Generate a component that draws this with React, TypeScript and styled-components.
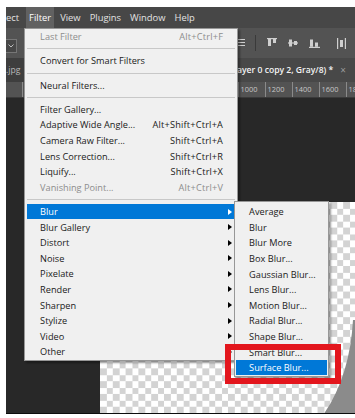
import React from "react";
import styled, { createGlobalStyle } from "styled-components";

const GlobalStyle = createGlobalStyle`
  html, body { margin: 0; padding: 0; background: #ffffff; }
  body { font-family: "Open Sans", "Noto Sans", Arial, sans-serif; }
`;

const Screen = styled.div`
  position: relative;
  box-sizing: border-box;
  width: 349px;
  height: 407px;
  margin: 7px 0 0 6px;
  display: flex;
  flex-direction: column;
  background: #282828;
  border-bottom: 1px solid #0c0c0c;
  overflow: hidden;
`;

const MenuBar = styled.div`
  height: 21px;
  flex: none;
  display: flex;
  align-items: stretch;
  gap: 3px;
  background: #474747;
  font-size: 9.4px;
  color: #e2e2e2;
`;

const MenuTitle = styled.div<{ $open?: boolean; $clipped?: boolean }>`
  position: relative;
  display: flex;
  align-items: center;
  padding: ${(p) => (p.$clipped ? "0 4px 0 0" : "0 3px")};
  background: ${(p) => (p.$open ? "#616161" : "transparent")};
  color: ${(p) => (p.$open ? "#ffffff" : "#e2e2e2")};
  white-space: nowrap;
`;

const OptionsBar = styled.div`
  height: 30px;
  flex: none;
  display: flex;
  align-items: center;
  background: #535353;
  padding-right: 9px;
`;

const PresetPicker = styled.div`
  width: 11px;
  height: 14px;
  box-sizing: border-box;
  border: 1px solid #767676;
  border-left: none;
  background: #474747;
  display: flex;
  align-items: center;
  justify-content: center;
  margin-top: 6px;
`;

const AlignGroup = styled.div`
  margin-left: auto;
  display: flex;
  align-items: center;
  gap: 11px;
`;

const ToolSeparator = styled.div`
  width: 1px;
  height: 16px;
  background: #3a3a3a;
  margin: 0 0 0 -1px;
`;

const AlignIcon = styled.svg<{ $gap?: number }>`
  display: block;
  flex: none;
  margin-left: ${(p) => p.$gap ?? 0}px;
`;

const TabBar = styled.div`
  height: 24px;
  flex: none;
  display: flex;
  align-items: stretch;
  background: #3e3e3e;
  font-size: 8.6px;
`;

const DocTab = styled.div<{ $active?: boolean }>`
  display: flex;
  align-items: center;
  gap: 7px;
  padding: ${(p) => (p.$active ? "0 9px 0 10px" : "0 10px 0 0")};
  margin-left: ${(p) => (p.$active ? "auto" : "0")};
  background: ${(p) => (p.$active ? "#484848" : "transparent")};
  color: ${(p) => (p.$active ? "#f4f4f4" : "#b9b9b9")};
  font-weight: ${(p) => (p.$active ? 600 : 400)};
  white-space: nowrap;
`;

const TabClose = styled.span`
  color: #9a9a9a;
  font-size: 10px;
  font-weight: 400;
`;

const Ruler = styled.div`
  height: 15px;
  flex: none;
  display: flex;
  background: #535353;
  padding-left: 15.5px;
  overflow: hidden;
  border-bottom: 1px solid #3a3a3a;
`;

const RulerMark = styled.div`
  flex: none;
  width: 27px;
  box-sizing: border-box;
  border-left: 1px solid #8a8a8a;
  padding: 3px 0 0 2px;
  font-size: 7.4px;
  line-height: 9px;
  color: #c8c8c8;
  white-space: nowrap;
`;

const Workspace = styled.div`
  flex: 1;
  min-height: 0;
  display: flex;
  padding: 104px 0 0 94px;
  background: #282828;
`;

const DocCanvas = styled.div`
  position: relative;
  flex: 1;
  background-color: #ffffff;
  background-image: conic-gradient(
    #ffffff 25%,
    #d3d3d3 0 50%,
    #ffffff 0 75%,
    #d3d3d3 0
  );
  background-size: 12.8px 12.8px;
`;

const ImageLayer = styled.svg`
  position: absolute;
  inset: 0;
  width: 100%;
  height: 100%;
`;

const DropMenu = styled.div`
  position: absolute;
  z-index: 10;
  top: 100%;
  left: -2px;
  width: 214px;
  box-sizing: border-box;
  padding: 0 2px;
  background: #f0f0f0;
  border: 1px solid #979797;
  box-shadow: 2px 2px 2px rgba(0, 0, 0, 0.35);
  font-size: 9.2px;
  font-weight: 400;
  color: #1a1a1a;
`;

const SubMenu = styled.div`
  position: absolute;
  z-index: 11;
  top: -2.8px;
  left: calc(100% - 1px);
  width: 95px;
  box-sizing: border-box;
  padding: 2px 1px 1px;
  background: #f0f0f0;
  border: 1px solid #979797;
  box-shadow: 2px 2px 2px rgba(0, 0, 0, 0.35);
`;

const MenuRow = styled.div<{ $active?: boolean; $disabled?: boolean; $inset?: number }>`
  position: relative;
  height: 15.6px;
  display: grid;
  grid-template-columns: 1fr auto 12px;
  align-items: center;
  padding-left: ${(p) => p.$inset ?? 13}px;
  white-space: nowrap;
  background: ${(p) => (p.$active ? "#0078d7" : "transparent")};
  color: ${(p) => (p.$active ? "#ffffff" : p.$disabled ? "#8d8d8d" : "#1a1a1a")};
`;

const Shortcut = styled.span`
  letter-spacing: 0.2px;
`;

const SubArrow = styled.span<{ $light?: boolean }>`
  justify-self: start;
  margin-left: 5px;
  width: 0;
  height: 0;
  border-top: 3px solid transparent;
  border-bottom: 3px solid transparent;
  border-left: 4px solid ${(p) => (p.$light ? "#ffffff" : "#000000")};
`;

const MenuSeparator = styled.div`
  height: 8.6px;
  display: flex;
  align-items: center;
  &::before {
    content: "";
    flex: 1;
    height: 1px;
    background: #c8c8c8;
  }
`;

const Callout = styled.div`
  position: absolute;
  z-index: 20;
  left: 219px;
  top: 337px;
  width: 116px;
  height: 40px;
  box-sizing: border-box;
  border: 6px solid #e3161d;
  pointer-events: none;
`;

type Entry =
  | { kind: "sep" }
  | {
      kind: "item";
      label: string;
      shortcut?: string;
      disabled?: boolean;
      sub?: boolean;
      active?: boolean;
    };

const filterEntries: Entry[] = [
  { kind: "item", label: "Last Filter", shortcut: "Alt+Ctrl+F", disabled: true },
  { kind: "sep" },
  { kind: "item", label: "Convert for Smart Filters" },
  { kind: "sep" },
  { kind: "item", label: "Neural Filters..." },
  { kind: "sep" },
  { kind: "item", label: "Filter Gallery..." },
  { kind: "item", label: "Adaptive Wide Angle...", shortcut: "Alt+Shift+Ctrl+A" },
  { kind: "item", label: "Camera Raw Filter...", shortcut: "Shift+Ctrl+A" },
  { kind: "item", label: "Lens Correction...", shortcut: "Shift+Ctrl+R" },
  { kind: "item", label: "Liquify...", shortcut: "Shift+Ctrl+X" },
  { kind: "item", label: "Vanishing Point...", shortcut: "Alt+Ctrl+V", disabled: true },
  { kind: "sep" },
  { kind: "item", label: "Blur", sub: true, active: true },
  { kind: "item", label: "Blur Gallery", sub: true },
  { kind: "item", label: "Distort", sub: true },
  { kind: "item", label: "Noise", sub: true },
  { kind: "item", label: "Pixelate", sub: true },
  { kind: "item", label: "Render", sub: true },
  { kind: "item", label: "Sharpen", sub: true },
  { kind: "item", label: "Stylize", sub: true },
  { kind: "item", label: "Video", sub: true },
  { kind: "item", label: "Other", sub: true },
];

const blurEntries = [
  "Average",
  "Blur",
  "Blur More",
  "Box Blur...",
  "Gaussian Blur...",
  "Lens Blur...",
  "Motion Blur...",
  "Radial Blur...",
  "Shape Blur...",
  "Smart Blur...",
  "Surface Blur...",
];

// ruler ticks every 200 units; labels hidden beneath the open menu are left out
const rulerTicks = Array.from({ length: 13 }, (_, i) => -600 + i * 200);

const iconStroke = "#cfcfcf";

function BlurMenu() {
  return (
    <SubMenu>
      {blurEntries.map((label) => (
        <MenuRow key={label} $inset={13} $active={label === "Surface Blur..."}>
          <span>{label}</span>
        </MenuRow>
      ))}
    </SubMenu>
  );
}

function FilterMenu() {
  return (
    <DropMenu>
      {filterEntries.map((e, i) =>
        e.kind === "sep" ? (
          <MenuSeparator key={i} />
        ) : (
          <MenuRow key={i} $active={e.active} $disabled={e.disabled}>
            <span>{e.label}</span>
            <Shortcut>{e.shortcut ?? ""}</Shortcut>
            {e.sub ? <SubArrow $light={e.active} /> : <span />}
            {e.active && <BlurMenu />}
          </MenuRow>
        )
      )}
    </DropMenu>
  );
}

export default function App() {
  return (
    <>
      <GlobalStyle />
      <Screen>
        <MenuBar>
          <MenuTitle $clipped>ect</MenuTitle>
          <MenuTitle $open>
            Filter
            <FilterMenu />
          </MenuTitle>
          <MenuTitle>View</MenuTitle>
          <MenuTitle>Plugins</MenuTitle>
          <MenuTitle>Window</MenuTitle>
          <MenuTitle>Help</MenuTitle>
        </MenuBar>

        <OptionsBar>
          <PresetPicker>
            <svg width="6" height="4" viewBox="0 0 6 4">
              <path d="M0.5 0.5 L3 3 L5.5 0.5" fill="none" stroke="#bdbdbd" strokeWidth="1" />
            </svg>
          </PresetPicker>
          <AlignGroup>
            <AlignIcon width="8" height="10" viewBox="0 0 8 10">
              <path d="M0 1.5h8M0 4.5h8M0 7.5h8" stroke={iconStroke} strokeWidth="1" />
            </AlignIcon>
            <ToolSeparator />
            <AlignIcon width="10" height="10" viewBox="0 0 10 10">
              <rect x="0" y="0" width="10" height="1.2" fill={iconStroke} />
              <rect x="1" y="1" width="3" height="7" fill={iconStroke} />
              <rect x="6" y="1" width="3" height="4" fill={iconStroke} />
            </AlignIcon>
            <AlignIcon width="10" height="10" viewBox="0 0 10 10">
              <rect x="0" y="4.4" width="10" height="1.2" fill={iconStroke} />
              <rect x="1" y="1.5" width="3" height="7" fill={iconStroke} />
              <rect x="6" y="3" width="3" height="4" fill={iconStroke} />
            </AlignIcon>
            <AlignIcon width="11" height="10" viewBox="0 0 11 10">
              <rect x="0" y="8.8" width="11" height="1.2" fill={iconStroke} />
              <rect x="1" y="1.5" width="3" height="7.3" fill={iconStroke} />
              <rect x="6" y="4.5" width="3" height="4.3" fill={iconStroke} />
            </AlignIcon>
            <AlignIcon width="9" height="11" viewBox="0 0 9 11" $gap={6}>
              <rect x="0" y="0" width="1.2" height="11" fill={iconStroke} />
              <rect x="7.8" y="0" width="1.2" height="11" fill={iconStroke} />
              <rect x="3" y="2" width="3" height="7" fill={iconStroke} />
            </AlignIcon>
          </AlignGroup>
        </OptionsBar>

        <TabBar>
          <DocTab>.jpg</DocTab>
          <DocTab $active>
            Untitled-1 @ 66.7% (Layer 0 copy 2, Gray/8) *<TabClose>×</TabClose>
          </DocTab>
        </TabBar>

        <Ruler>
          {rulerTicks.map((n) => (
            <RulerMark key={n}>{n >= 1000 ? n : ""}</RulerMark>
          ))}
        </Ruler>

        <Workspace>
          <DocCanvas>
            <ImageLayer>
              <path d="M253 118 C251 155 241 188 223 213 L260 213 L260 118 Z" fill="#8b8b8b" />
            </ImageLayer>
          </DocCanvas>
        </Workspace>

        <Callout />
      </Screen>
    </>
  );
}
